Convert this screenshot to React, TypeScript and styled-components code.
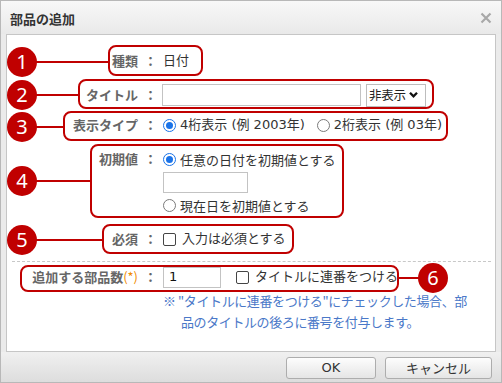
import React from "react";
import styled, { createGlobalStyle } from "styled-components";

const GlobalStyle = createGlobalStyle`
  html, body { margin: 0; padding: 0; background: #ffffff; }
  body { font-family: "DejaVu Sans", "Noto Sans CJK JP", sans-serif; }
`;

const JP = `"Noto Sans CJK JP", sans-serif`;
const RED = "#c00000";

const Dialog = styled.div`
  position: relative;
  width: 502px;
  height: 383px;
  box-sizing: border-box;
  border: 1px solid #b8b8b8;
  background: #ebebeb;
  display: flex;
  flex-direction: column;
  font-size: 13px;
  color: #333;
  overflow: hidden;
`;

const TitleBar = styled.div`
  height: 33px;
  flex: none;
  display: flex;
  align-items: center;
  justify-content: space-between;
  padding: 0 9px 0 9px;
  background: linear-gradient(#f8f8f8, #e9e9e9);
`;

const Title = styled.div`
  font-family: ${JP};
  font-weight: bold;
  font-size: 13px;
  color: #333;
  padding-top: 1px;
`;

const Body = styled.div`
  flex: 1;
  margin: 0 5px;
  background: #fff;
  border: 1px solid #c6c6c6;
  padding-top: 11px;
  display: flex;
  flex-direction: column;
`;

const Row = styled.div<{ $h: number; $top?: number; $align?: string }>`
  display: grid;
  grid-template-columns: 150px 1fr;
  column-gap: 6px;
  height: ${(p) => p.$h}px;
  padding-top: ${(p) => p.$top ?? 0}px;
  align-items: ${(p) => p.$align ?? "center"};
  flex: none;
`;

const Label = styled.div`
  font-family: ${JP};
  font-weight: bold;
  color: #666;
  text-align: right;
  white-space: nowrap;
  line-height: 22px;
`;

const Colon = styled.span`
  display: inline-block;
  width: 13px;
  margin-left: 6px;
  text-align: center;
`;

const Required = styled.span`
  color: #f08c00;
  font-weight: normal;
`;

const Value = styled.div`
  display: flex;
  align-items: center;
  line-height: 22px;
  white-space: nowrap;
`;

const Stack = styled.div`
  display: flex;
  flex-direction: column;
  align-items: flex-start;
`;

const TextInput = styled.input<{ $w: number; $h: number }>`
  box-sizing: border-box;
  width: ${(p) => p.$w}px;
  height: ${(p) => p.$h}px;
  border: 1px solid #c3c3c3;
  margin: 0;
  padding: 0 5px;
  font: inherit;
  color: #111;
  background: #fff;
  outline: none;
`;

const TitleInput = styled(TextInput)`
  margin-left: -1px;
`;

const DateInput = styled(TextInput)`
  margin: 2px 0 1px;
`;

const SelectBox = styled.div`
  box-sizing: border-box;
  width: 60px;
  height: 23px;
  margin-left: 5px;
  border: 1px solid #bdbdbd;
  background: #fff;
  display: flex;
  align-items: center;
  gap: 3px;
  padding: 0 0 0 2px;
  font-family: ${JP};
  font-size: 12.5px;
  letter-spacing: -0.3px;
  color: #222;
`;

const Option = styled.label<{ $gap?: number }>`
  display: inline-flex;
  align-items: center;
  gap: 4px;
  margin-left: ${(p) => p.$gap ?? 0}px;
  color: #333;
  height: 22px;
`;

const RadioMark = styled.span<{ $checked?: boolean }>`
  width: 13px;
  height: 13px;
  box-sizing: border-box;
  border-radius: 50%;
  border: 1px solid ${(p) => (p.$checked ? "#1a73e8" : "#7a7a7a")};
  background: #fff;
  display: inline-flex;
  align-items: center;
  justify-content: center;
  flex: none;
  &::after {
    content: "";
    width: 7px;
    height: 7px;
    border-radius: 50%;
    background: ${(p) => (p.$checked ? "#1a73e8" : "transparent")};
  }
`;

const CheckMark = styled.span`
  width: 13px;
  height: 13px;
  box-sizing: border-box;
  border: 1px solid #444;
  border-radius: 2px;
  background: #fff;
  flex: none;
`;

const CheckOption = styled(Option)`
  gap: 6px;
`;

const Divider = styled.div`
  margin: 11px 4px 0 5px;
  border-top: 1px dashed #c8c8c8;
  flex: none;
`;

const Note = styled.div`
  font-family: ${JP};
  color: #4a78c8;
  line-height: 21px;
  letter-spacing: -0.4px;
  padding-left: 18px;
  text-indent: -18px;
  white-space: nowrap;
`;

const Footer = styled.div`
  height: 30px;
  flex: none;
  display: flex;
  align-items: center;
  justify-content: flex-end;
  gap: 9px;
  padding-right: 9px;
  background: linear-gradient(#f0f0f0, #dddddd);
`;

const Button = styled.button<{ $w: number }>`
  width: ${(p) => p.$w}px;
  height: 22px;
  box-sizing: border-box;
  border: 1px solid #adadad;
  border-radius: 3px;
  background: linear-gradient(#fdfdfd, #e5e5e5);
  font-family: "DejaVu Sans", "Noto Sans CJK JP", sans-serif;
  font-size: 13px;
  color: #333;
  padding: 0;
  margin-top: 1px;
`;

/* ---------- annotation overlay ---------- */

const Marker = styled.div<{ $x: number; $y: number }>`
  position: absolute;
  left: ${(p) => p.$x - 15}px;
  top: ${(p) => p.$y - 15}px;
  width: 30px;
  height: 30px;
  border-radius: 50%;
  background: ${RED};
  color: #fff;
  display: flex;
  align-items: center;
  justify-content: center;
  font-family: "Noto Sans", sans-serif;
  font-size: 20px;
  line-height: 1;
`;

const Frame = styled.div<{ $l: number; $t: number; $w: number; $h: number }>`
  position: absolute;
  left: ${(p) => p.$l}px;
  top: ${(p) => p.$t}px;
  width: ${(p) => p.$w}px;
  height: ${(p) => p.$h}px;
  box-sizing: border-box;
  border: 2px solid ${RED};
  border-radius: 8px;
  pointer-events: none;
`;

const Connector = styled.div<{ $x1: number; $x2: number; $y: number }>`
  position: absolute;
  left: ${(p) => p.$x1}px;
  top: ${(p) => p.$y - 1}px;
  width: ${(p) => p.$x2 - p.$x1}px;
  height: 2px;
  background: ${RED};
`;

type Callout = {
  n: number;
  cx: number;
  cy: number;
  box: [number, number, number, number];
  right?: boolean;
};

const callouts: Callout[] = [
  { n: 1, cx: 21, cy: 61, box: [107, 44, 95, 31] },
  { n: 2, cx: 21, cy: 94, box: [77, 78, 356, 30] },
  { n: 3, cx: 21, cy: 126, box: [62, 110, 385, 30] },
  { n: 4, cx: 21, cy: 180, box: [89, 143, 254, 74] },
  { n: 5, cx: 21, cy: 239, box: [101, 223, 192, 30] },
  { n: 6, cx: 432, cy: 277, box: [19, 264, 379, 27], right: true },
];

const CloseIcon = () => (
  <svg width="12" height="12" viewBox="0 0 12 12">
    <path d="M1.5 1.5 L10.5 10.5 M10.5 1.5 L1.5 10.5" stroke="#a8a8a8" strokeWidth="2.2" />
  </svg>
);

const Chevron = () => (
  <svg width="9" height="8" viewBox="0 0 9 8">
    <path d="M1 1.8 L4.5 5.4 L8 1.8" stroke="#111" strokeWidth="2.3" fill="none" />
  </svg>
);

export default function App() {
  return (
    <>
      <GlobalStyle />
      <Dialog>
        <TitleBar>
          <Title>部品の追加</Title>
          <CloseIcon />
        </TitleBar>
        <Body>
          <Row $h={30}>
            <Label>
              種類<Colon>：</Colon>
            </Label>
            <Value>日付</Value>
          </Row>
          <Row $h={38}>
            <Label>
              タイトル<Colon>：</Colon>
            </Label>
            <Value>
              <TitleInput $w={199} $h={22} defaultValue="" />
              <SelectBox>
                <span>非表示</span>
                <Chevron />
              </SelectBox>
            </Value>
          </Row>
          <Row $h={22}>
            <Label>
              表示タイプ<Colon>：</Colon>
            </Label>
            <Value>
              <Option>
                <RadioMark $checked />
                4桁表示 (例 2003年)
              </Option>
              <Option $gap={12}>
                <RadioMark />
                2桁表示 (例 03年)
              </Option>
            </Value>
          </Row>
          <Row $h={80} $top={12} $align="start">
            <Label>
              初期値<Colon>：</Colon>
            </Label>
            <Stack>
              <Option>
                <RadioMark $checked />
                任意の日付を初期値とする
              </Option>
              <DateInput $w={85} $h={21} defaultValue="" />
              <Option>
                <RadioMark />
                現在日を初期値とする
              </Option>
            </Stack>
          </Row>
          <Row $h={22}>
            <Label>
              必須<Colon>：</Colon>
            </Label>
            <Value>
              <CheckOption>
                <CheckMark />
                入力は必須とする
              </CheckOption>
            </Value>
          </Row>
          <Divider />
          <Row $h={26} $top={2}>
            <Label>
              追加する部品数<Required>(*)</Required>
              <Colon>：</Colon>
            </Label>
            <Value>
              <TextInput $w={58} $h={21} defaultValue="1" />
              <CheckOption $gap={15}>
                <CheckMark />
                タイトルに連番をつける
              </CheckOption>
            </Value>
          </Row>
          <Row $h={42} $align="start">
            <span />
            <Note>
              ※ "タイトルに連番をつける"にチェックした場合、部
              <br />
              品のタイトルの後ろに番号を付与します。
            </Note>
          </Row>
        </Body>
        <Footer>
          <Button $w={90}>OK</Button>
          <Button $w={107}>キャンセル</Button>
        </Footer>
        {callouts.map((c) => {
          const [l, t, w, h] = c.box;
          return (
            <React.Fragment key={c.n}>
              {c.right ? (
                <Connector $x1={l + w} $x2={c.cx - 14} $y={c.cy} />
              ) : (
                <Connector $x1={c.cx + 14} $x2={l} $y={c.cy} />
              )}
              <Frame $l={l} $t={t} $w={w} $h={h} />
              <Marker $x={c.cx} $y={c.cy}>
                {c.n}
              </Marker>
            </React.Fragment>
          );
        })}
      </Dialog>
    </>
  );
}
